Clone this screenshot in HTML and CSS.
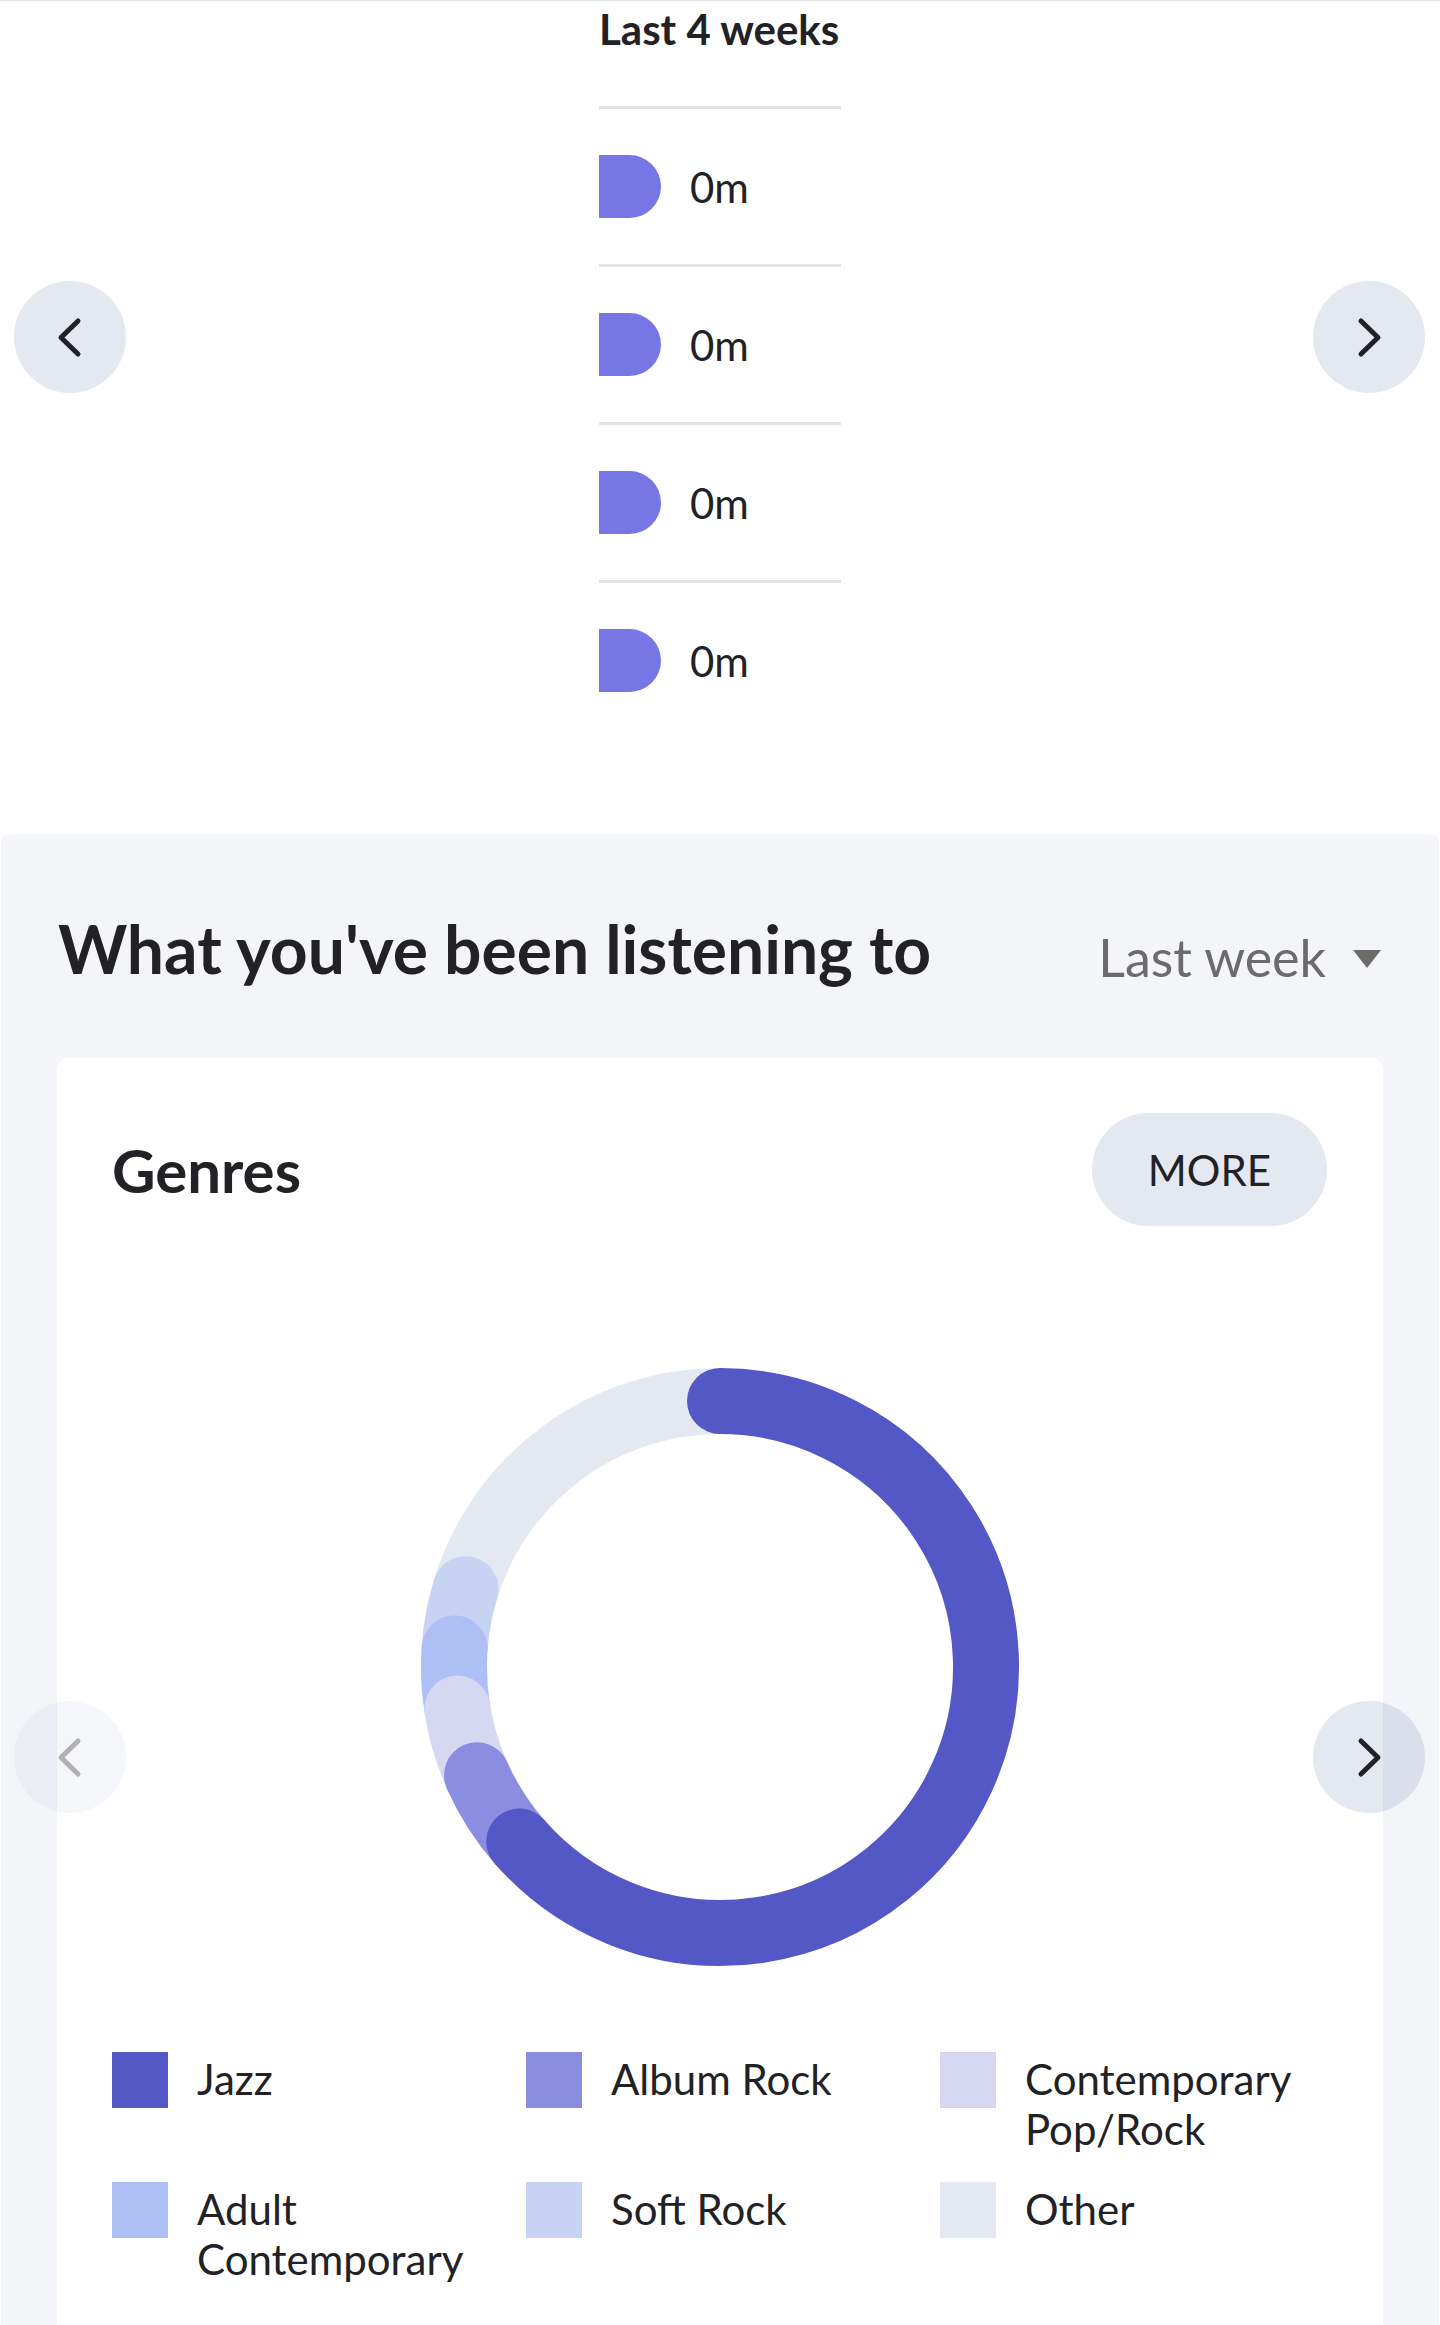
FILE: index.html
```html
<!DOCTYPE html>
<html lang="en">
<head>
<meta charset="utf-8">
<title>Listening</title>
<link rel="stylesheet" href="styles.css">
</head>
<body>
<div class="page">
  <div class="topline"></div>
  <div class="week-carousel">
    <div class="week-col">
      <div class="week-title">Last 4 weeks</div>
      <div class="week-row"><span class="bar"></span><span class="val">0m</span></div>
      <div class="week-row"><span class="bar"></span><span class="val">0m</span></div>
      <div class="week-row"><span class="bar"></span><span class="val">0m</span></div>
      <div class="week-row"><span class="bar"></span><span class="val">0m</span></div>
    </div>
    <button class="nav-btn nav-prev nav-top" aria-label="Previous">
      <svg width="112" height="112" viewBox="0 0 112 112"><path d="M64 40 L47 56.5 L64 73" /></svg>
    </button>
    <button class="nav-btn nav-next nav-top" aria-label="Next">
      <svg width="112" height="112" viewBox="0 0 112 112"><path d="M48 40 L65 56.5 L48 73" /></svg>
    </button>
  </div>

  <section class="listening">
    <div class="listening-head">
      <h2 class="listening-title">What you've been listening to</h2>
      <div class="period">Last week<span class="caret"></span></div>
    </div>

    <div class="card">
      <div class="card-head">
        <h3 class="card-title">Genres</h3>
        <button class="more-btn">MORE</button>
      </div>
      <div class="donut-wrap">
        <svg class="donut" width="600" height="600" viewBox="0 0 600 600">
          <g fill="none" stroke-width="66" stroke-linecap="round">
            <path stroke="#e4e8f1" d="M45.6 222.2 A266 266 0 0 1 300 34" />
            <path stroke="#c8d3f3" d="M34.6 281.4 A266 266 0 0 1 45.6 222.2" />
            <path stroke="#aebff5" d="M37.3 341.6 A266 266 0 0 1 34.6 281.4" />
            <path stroke="#d6d8f2" d="M57.0 408.2 A266 266 0 0 1 37.3 341.6" />
            <path stroke="#8a8de0" d="M99.25 474.5 A266 266 0 0 1 57.0 408.2" />
            <path stroke="#5457c6" d="M300 34 A266 266 0 1 1 99.25 474.5" />
          </g>
        </svg>
      </div>
      <div class="legend">
        <div class="legend-item"><span class="swatch sw-jazz"></span><span class="legend-text">Jazz</span></div>
        <div class="legend-item"><span class="swatch sw-album"></span><span class="legend-text">Album Rock</span></div>
        <div class="legend-item"><span class="swatch sw-contemp"></span><span class="legend-text">Contemporary Pop/Rock</span></div>
        <div class="legend-item"><span class="swatch sw-adult"></span><span class="legend-text">Adult Contemporary</span></div>
        <div class="legend-item"><span class="swatch sw-soft"></span><span class="legend-text">Soft Rock</span></div>
        <div class="legend-item"><span class="swatch sw-other"></span><span class="legend-text">Other</span></div>
      </div>
    </div>

    <button class="nav-btn nav-prev nav-bottom disabled" aria-label="Previous">
      <svg width="112" height="112" viewBox="0 0 112 112"><path d="M64 40 L47 56.5 L64 73" /></svg>
    </button>
    <button class="nav-btn nav-next nav-bottom" aria-label="Next">
      <svg width="112" height="112" viewBox="0 0 112 112"><path d="M48 40 L65 56.5 L48 73" /></svg>
    </button>
  </section>
</div>
</body>
</html>
```

FILE: styles.css
```css
* { box-sizing: border-box; }

html, body {
  margin: 0;
  padding: 0;
  background: #ffffff;
}

body {
  font-family: Lato, "Open Sans", "Liberation Sans", sans-serif;
  color: #222226;
}

.page {
  width: 1440px;
}

.topline {
  height: 1px;
  background: #e4e4e4;
}

/* ---------- week carousel ---------- */
.week-carousel {
  position: relative;
  padding: 3px 0 96px;
}

.week-col {
  width: 242px;
  margin: 0 auto;
}

.week-title {
  font-size: 42px;
  line-height: 50px;
  font-weight: 700;
  white-space: nowrap;
  margin-bottom: 52px;
}

.week-row {
  height: 158px;
  border-top: 3px solid #e3e3e3;
  display: flex;
  align-items: center;
  gap: 29px;
}

.bar {
  width: 62px;
  height: 63px;
  background: #7676e5;
  border-radius: 0 32px 32px 0;
  flex: none;
}

.val {
  font-size: 42px;
  line-height: 50px;
}

/* ---------- nav buttons ---------- */
.nav-btn {
  position: absolute;
  width: 112px;
  height: 112px;
  padding: 0;
  border: 0;
  border-radius: 50%;
  background: rgba(105, 127, 177, 0.18);
  cursor: pointer;
}

.nav-btn svg {
  display: block;
}

.nav-btn path {
  fill: none;
  stroke: #222226;
  stroke-width: 5;
  stroke-linecap: round;
  stroke-linejoin: round;
}

.nav-top { top: 280px; }
.nav-top.nav-prev { left: 14px; }
.nav-top.nav-next { right: 15px; }

.nav-bottom { top: 867px; }
.nav-bottom.nav-prev { left: 13px; }
.nav-bottom.nav-next { right: 14px; }

.nav-btn.disabled {
  opacity: 0.35;
}

/* ---------- listening section ---------- */
.listening {
  position: relative;
  margin: 0 1px;
  background: #f4f5f9;
  border-radius: 8px 8px 0 0;
  padding: 74px 56px 0;
}

.listening-head {
  display: flex;
  justify-content: space-between;
  align-items: flex-start;
}

.listening-title {
  margin: 0 0 0 1px;
  font-size: 66px;
  line-height: 82px;
  font-weight: 700;
}

.period {
  display: flex;
  align-items: center;
  margin-top: 18px;
  font-size: 52px;
  line-height: 62px;
  color: #6b6b6b;
  padding-right: 2px;
}

.caret {
  width: 0;
  height: 0;
  margin-left: 27px;
  margin-top: 4px;
  border-left: 14px solid transparent;
  border-right: 14px solid transparent;
  border-top: 18px solid #6b6b6b;
}

/* ---------- card ---------- */
.card {
  margin-top: 68px;
  background: #ffffff;
  border-radius: 12px 12px 0 0;
  padding: 55px 56px 41px 55px;
}

.card-head {
  display: flex;
  justify-content: space-between;
  align-items: center;
  height: 113px;
}

.card-title {
  margin: 0;
  font-size: 60px;
  line-height: 72px;
  font-weight: 700;
}

.more-btn {
  height: 113px;
  padding: 0 56px;
  border: 0;
  border-radius: 57px;
  background: #e4e8f1;
  font-family: inherit;
  font-size: 42px;
  color: #222226;
  cursor: pointer;
}

.donut-wrap {
  margin-top: 141px;
  display: flex;
  justify-content: center;
}

.donut {
  display: block;
}

/* ---------- legend ---------- */
.legend {
  margin-top: 85px;
  display: grid;
  grid-template-columns: repeat(3, 1fr);
  column-gap: 27px;
  row-gap: 28px;
}

.legend-item {
  display: flex;
  align-items: flex-start;
  gap: 29px;
}

.swatch {
  width: 56px;
  height: 56px;
  flex: none;
}

.legend-text {
  font-size: 42px;
  line-height: 50px;
  margin-top: 2px;
}

.sw-jazz { background: #5457c6; }
.sw-album { background: #8a8de0; }
.sw-contemp { background: #d6d8f2; }
.sw-adult { background: #aebff5; }
.sw-soft { background: #c8d3f3; }
.sw-other { background: #e4e8f1; }
```
